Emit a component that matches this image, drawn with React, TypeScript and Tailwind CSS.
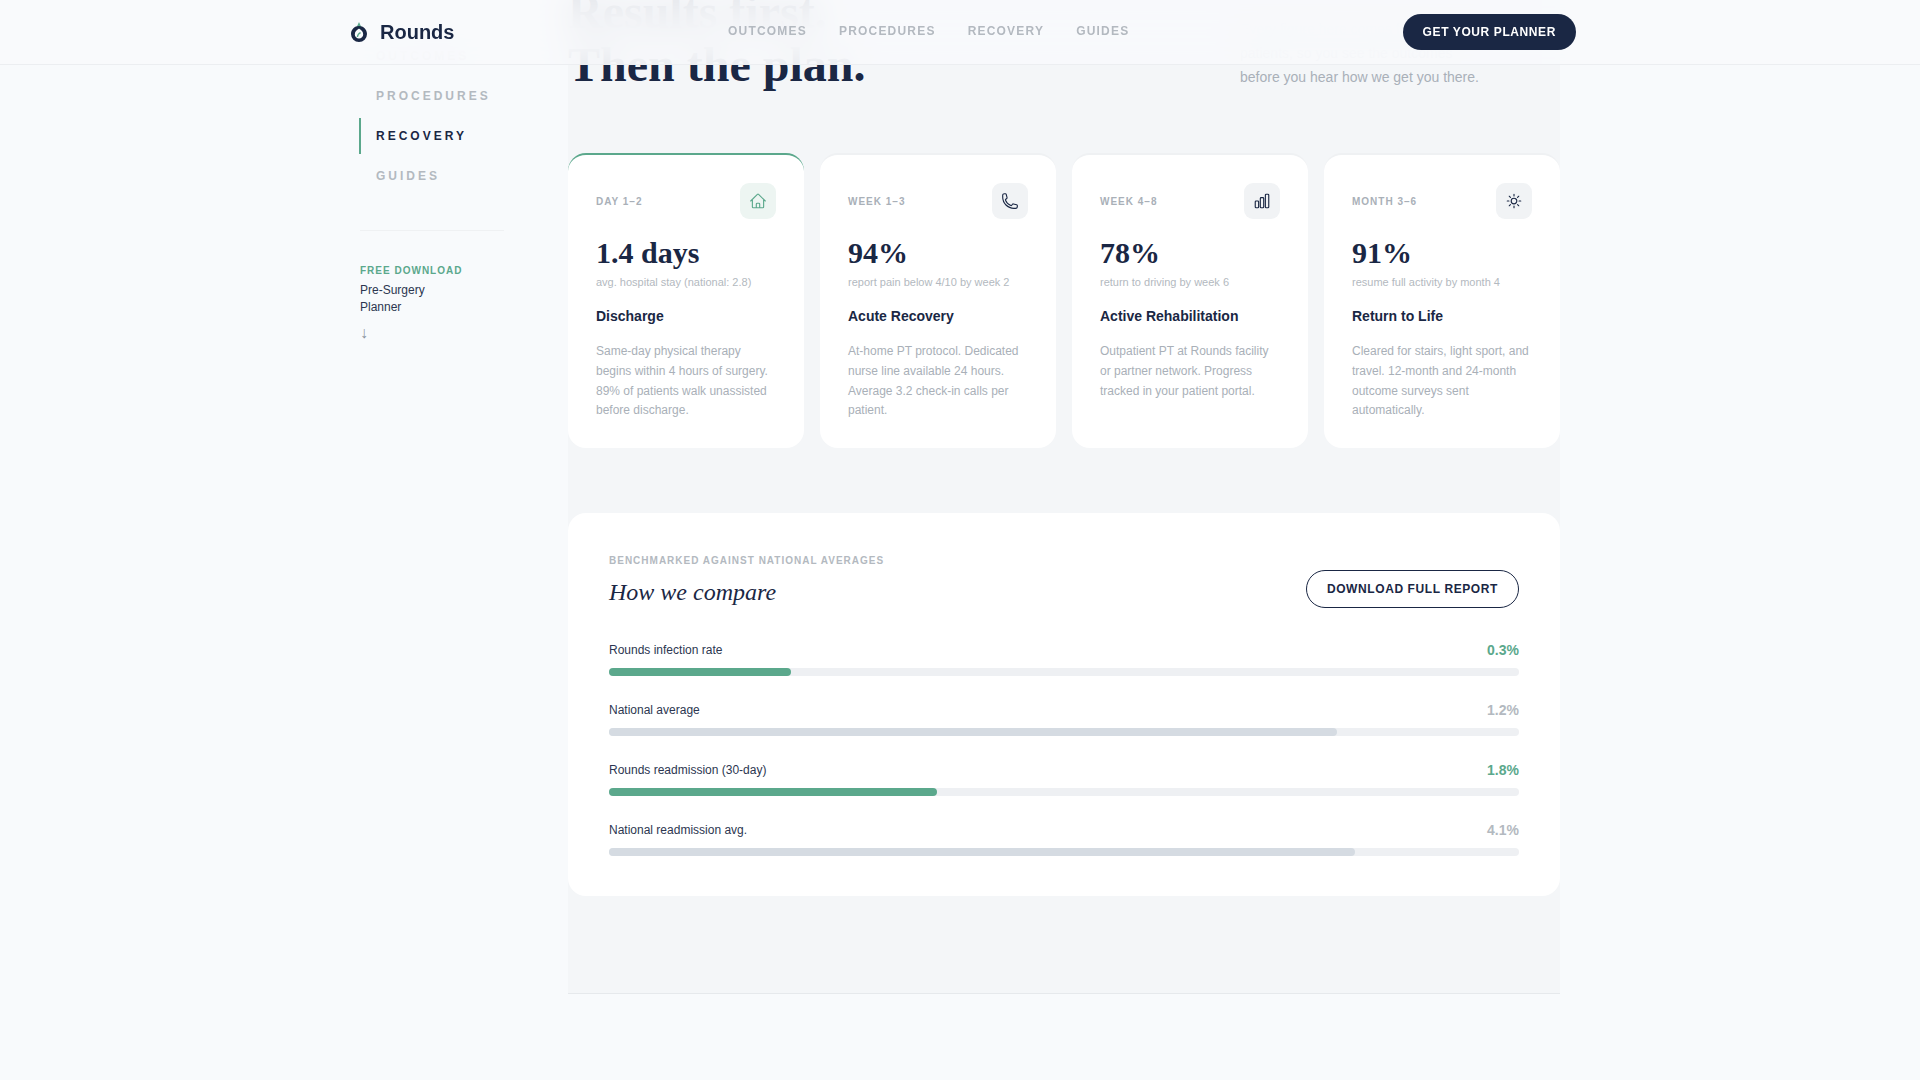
const SANS = "font-['Liberation_Sans',Arial,sans-serif]";

const sideLinks = [
  { label: "OUTCOMES", active: false },
  { label: "PROCEDURES", active: false },
  { label: "RECOVERY", active: true },
  { label: "GUIDES", active: false },
];

const navLinks = ["OUTCOMES", "PROCEDURES", "RECOVERY", "GUIDES"];

const HOUSE =
  "m2.25 12 8.954-8.955c.44-.439 1.152-.439 1.591 0L21.75 12M4.5 9.75v10.125c0 .621.504 1.125 1.125 1.125H9.75v-4.875c0-.621.504-1.125 1.125-1.125h2.25c.621 0 1.125.504 1.125 1.125V21h4.125c.621 0 1.125-.504 1.125-1.125V9.75M8.25 21h8.25";
const PHONE =
  "M2.25 6.75c0 8.284 6.716 15 15 15h2.25a2.25 2.25 0 0 0 2.25-2.25v-1.372c0-.516-.351-.966-.852-1.091l-4.423-1.106c-.44-.11-.902.055-1.173.417l-.97 1.293c-.282.376-.769.542-1.21.38a12.035 12.035 0 0 1-7.143-7.143c-.162-.441.004-.928.38-1.21l1.293-.97c.363-.271.527-.734.417-1.173L6.963 3.102a1.125 1.125 0 0 0-1.091-.852H4.5A2.25 2.25 0 0 0 2.25 4.5v2.25Z";
const BARS =
  "M3 13.125C3 12.504 3.504 12 4.125 12h2.25c.621 0 1.125.504 1.125 1.125v6.75C7.5 20.496 6.996 21 6.375 21h-2.25A1.125 1.125 0 0 1 3 19.875v-6.75ZM9.75 8.625c0-.621.504-1.125 1.125-1.125h2.25c.621 0 1.125.504 1.125 1.125v11.25c0 .621-.504 1.125-1.125 1.125h-2.25a1.125 1.125 0 0 1-1.125-1.125V8.625ZM16.5 4.125c0-.621.504-1.125 1.125-1.125h2.25C20.496 3 21 3.504 21 4.125v15.75c0 .621-.504 1.125-1.125 1.125h-2.25a1.125 1.125 0 0 1-1.125-1.125V4.125Z";
const SUN =
  "M12 3v2.25m6.364.386-1.591 1.591M21 12h-2.25m-.386 6.364-1.591-1.591M12 18.75V21m-4.773-4.227-1.591 1.591M5.25 12H3m4.227-4.773L5.636 5.636M15.75 12a3.75 3.75 0 1 1-7.5 0 3.75 3.75 0 0 1 7.5 0Z";

const stages = [
  {
    when: "DAY 1–2",
    icon: HOUSE,
    value: "1.4 days",
    sub: "avg. hospital stay (national: 2.8)",
    title: "Discharge",
    body: "Same-day physical therapy begins within 4 hours of surgery. 89% of patients walk unassisted before discharge.",
    first: true,
  },
  {
    when: "WEEK 1–3",
    icon: PHONE,
    value: "94%",
    sub: "report pain below 4/10 by week 2",
    title: "Acute Recovery",
    body: "At-home PT protocol. Dedicated nurse line available 24 hours. Average 3.2 check-in calls per patient.",
    first: false,
  },
  {
    when: "WEEK 4–8",
    icon: BARS,
    value: "78%",
    sub: "return to driving by week 6",
    title: "Active Rehabilitation",
    body: "Outpatient PT at Rounds facility or partner network. Progress tracked in your patient portal.",
    first: false,
  },
  {
    when: "MONTH 3–6",
    icon: SUN,
    value: "91%",
    sub: "resume full activity by month 4",
    title: "Return to Life",
    body: "Cleared for stairs, light sport, and travel. 12-month and 24-month outcome surveys sent automatically.",
    first: false,
  },
];

const benchmarks = [
  { label: "Rounds infection rate", value: "0.3%", width: 20, ours: true },
  { label: "National average", value: "1.2%", width: 80, ours: false },
  { label: "Rounds readmission (30-day)", value: "1.8%", width: 36, ours: true },
  { label: "National readmission avg.", value: "4.1%", width: 82, ours: false },
];

function Logo() {
  return (
    <svg width="18" height="20" viewBox="0 0 18 20" fill="none">
      <path d="M9 0L12 6.5H6L9 0Z" fill="#5ba88c" />
      <path
        fillRule="evenodd"
        d="M9 4C13.4 4 17 7.4 17 12A8 8 0 0 1 1 12C1 7.4 4.6 4 9 4ZM9 6.6C6.6 8.2 4.8 10 4.8 12.4A4.2 4.2 0 0 0 13.2 12.4C13.2 10 11.4 8.2 9 6.6Z"
        fill="#1a2744"
      />
      <path d="M7.4 15C7.6 12.8 8.6 11.4 10.6 10.6" stroke="#5ba88c" strokeWidth="1.3" />
    </svg>
  );
}

function StageCard({ stage }: { stage: (typeof stages)[number] }) {
  return (
    <div
      className={`flex h-[295px] flex-col rounded-[18px] border-t-2 bg-white px-[28px] pt-[28px] ${
        stage.first ? "border-[#5ba88c]" : "border-[#eff1f3]"
      }`}
    >
      <div className="flex items-center justify-between">
        <span className="mt-px text-[10px] font-bold tracking-[0.1em] text-[#a9b0b8]">{stage.when}</span>
        <div
          className={`flex h-9 w-9 items-center justify-center rounded-[9px] ${
            stage.first ? "bg-[#edf5f2]" : "bg-[#f1f3f5]"
          }`}
        >
          <svg
            width="18"
            height="18"
            viewBox="0 0 24 24"
            fill="none"
            stroke={stage.first ? "#5ba88c" : "#1a2744"}
            strokeWidth="1.5"
            strokeLinecap="round"
            strokeLinejoin="round"
          >
            <path d={stage.icon} />
          </svg>
        </div>
      </div>
      <div className="mt-[16px] font-['Liberation_Serif',serif] text-[30px] font-bold leading-[36px] text-[#1a2744]">
        {stage.value}
      </div>
      <div className="mt-[3px] text-[11px] leading-[16px] text-[#b3b9c0]">{stage.sub}</div>
      <div className="mt-[16px] text-[14px] font-bold leading-[20px] text-[#1a2744]">{stage.title}</div>
      <p className="mt-[16px] text-[12px] leading-[19.8px] text-[#a9b0b8]">{stage.body}</p>
    </div>
  );
}

function BenchmarkRow({ row }: { row: (typeof benchmarks)[number] }) {
  return (
    <div>
      <div className="flex items-center justify-between">
        <span className="text-[12px] leading-[20px] text-[#2c3650]">{row.label}</span>
        <span className={`text-[14px] font-bold leading-[20px] ${row.ours ? "text-[#5ba88c]" : "text-[#b3b9c0]"}`}>
          {row.value}
        </span>
      </div>
      <div className="mt-[8px] h-2 rounded-full bg-[#eef0f3]">
        <div
          className={`h-2 rounded-full ${row.ours ? "bg-[#5ba88c]" : "bg-[#d5dbe2]"}`}
          style={{ width: `${row.width}%` }}
        />
      </div>
    </div>
  );
}

export default function App() {
  return (
    <div className={`relative h-screen overflow-hidden bg-[#f8fafc] ${SANS}`}>
      {/* Fixed top bar, page below it is scrolled */}
      <header className="absolute inset-x-0 top-0 z-10 h-[65px] border-b border-[#eceef1] bg-[#f8fafc]/90 backdrop-blur-lg">
        <div className="mx-auto flex h-16 w-[1232px] items-center justify-between">
          <div className="flex w-[384px] items-center gap-[12px] pl-[6px]">
            <Logo />
            <span className="text-[20px] font-bold leading-7 text-[#1a2744]">Rounds</span>
          </div>
          <nav className="mb-[2px] flex flex-1 items-center gap-[32px]">
            {navLinks.map((link) => (
              <span key={link} className="text-[12px] font-bold tracking-[0.1em] text-[#b3b9c0]">
                {link}
              </span>
            ))}
          </nav>
          <button className="h-9 rounded-full bg-[#1a2744] px-5 text-[12px] font-bold tracking-[0.05em] text-white">
            GET YOUR PLANNER
          </button>
        </div>
      </header>

      <div className="mx-auto flex w-[1200px]">
        <aside className="w-[208px] pt-[38px]">
          <div className="-ml-px flex flex-col gap-1">
            {sideLinks.map((link) => (
              <div
                key={link.label}
                className={`flex h-9 items-center border-l-2 pl-[15px] text-[12px] font-bold tracking-[0.25em] ${
                  link.active ? "border-[#5ba88c] text-[#1a2744]" : "border-transparent text-[#b3b9c0]"
                }`}
              >
                {link.label}
              </div>
            ))}
          </div>
          <div className="mt-[36px] w-[144px] border-t border-[#eff1f3] pt-[33px]">
            <div className="text-[10px] font-bold leading-[14px] tracking-[0.1em] text-[#5ba88c]">FREE DOWNLOAD</div>
            <div className="mt-[4px] text-[12px] leading-[17px] text-[#2c3650]">
              Pre-Surgery
              <br />
              Planner
            </div>
            <div className="mt-[8px] text-[16px] leading-[18px] text-[#8a949e]">↓</div>
          </div>
        </aside>

        <main className="mt-[-15px] h-[1009px] w-[992px] border-b border-[#e6e9ec] bg-[#f4f6f8]">
          <section className="flex items-end justify-between">
            <h1 className="font-['Liberation_Serif',serif] text-[48px] font-bold leading-[53px] text-[#1a2744]">
              Results first.
              <br />
              Then the plan.
            </h1>
            <p className="w-[320px] pb-[2px] text-[14px] leading-[24px] text-[#a9b0b8]">
              Every figure here comes from our own
              <br />
              patients, so you see the outcomes
              <br />
              before you hear how we get you there.
            </p>
          </section>

          <section className="mt-[62px] grid grid-cols-4 gap-4">
            {stages.map((stage) => (
              <StageCard key={stage.when} stage={stage} />
            ))}
          </section>

          <section className="mt-[65px] h-[383px] rounded-[18px] bg-white p-[41px]">
            <div className="flex items-end justify-between">
              <div>
                <div className="text-[10px] font-bold leading-[14px] tracking-[0.1em] text-[#b3b9c0]">
                  BENCHMARKED AGAINST NATIONAL AVERAGES
                </div>
                <h2 className="mt-[8px] font-['Liberation_Serif',serif] text-[24px] italic leading-[32px] text-[#1a2744]">
                  How we compare
                </h2>
              </div>
              <button className="h-[38px] rounded-full border border-[#1a2744] px-5 text-[12px] font-bold tracking-[0.05em] text-[#1a2744]">
                DOWNLOAD FULL REPORT
              </button>
            </div>
            <div className="mt-[32px] flex flex-col gap-[24px]">
              {benchmarks.map((row) => (
                <BenchmarkRow key={row.label} row={row} />
              ))}
            </div>
          </section>
        </main>
      </div>
    </div>
  );
}
